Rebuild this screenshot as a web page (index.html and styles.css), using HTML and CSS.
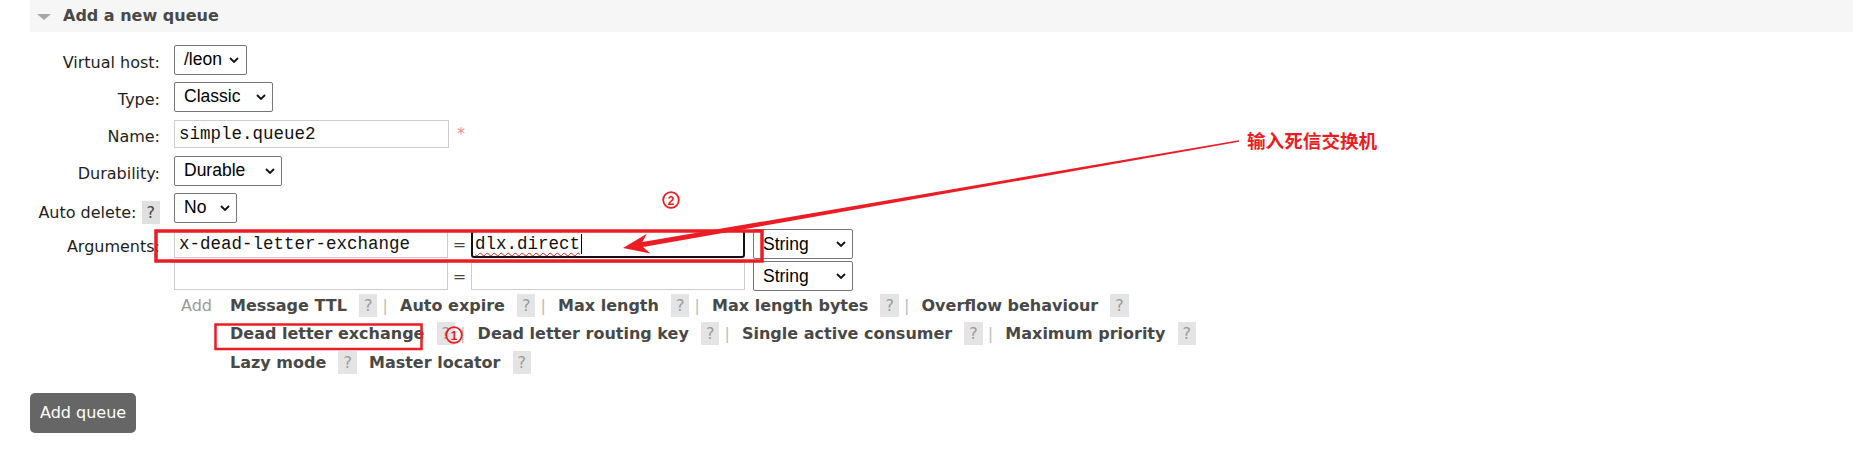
FILE: index.html
```html
<!DOCTYPE html>
<html lang="en">
<head>
<meta charset="utf-8">
<title>Add a new queue</title>
<link rel="stylesheet" href="styles.css">
</head>
<body>
<div class="page">
  <div class="section-head">
    <span class="tri"></span>
    <h2>Add a new queue</h2>
  </div>

  <form class="queue-form">
    <div class="row">
      <div class="label">Virtual host:</div>
      <div class="field">
        <div class="select w-vhost"><span>/leon</span><svg class="chev" viewBox="0 0 10 6"><path d="M1 1L5 5L9 1"/></svg></div>
      </div>
    </div>
    <div class="row">
      <div class="label">Type:</div>
      <div class="field">
        <div class="select w-type"><span>Classic</span><svg class="chev" viewBox="0 0 10 6"><path d="M1 1L5 5L9 1"/></svg></div>
      </div>
    </div>
    <div class="row">
      <div class="label">Name:</div>
      <div class="field">
        <div class="input w-name">simple.queue2</div>
        <span class="req">*</span>
      </div>
    </div>
    <div class="row">
      <div class="label">Durability:</div>
      <div class="field">
        <div class="select w-dur"><span>Durable</span><svg class="chev" viewBox="0 0 10 6"><path d="M1 1L5 5L9 1"/></svg></div>
      </div>
    </div>
    <div class="row">
      <div class="label">Auto delete: <span class="help dark">?</span></div>
      <div class="field">
        <div class="select w-auto"><span>No</span><svg class="chev" viewBox="0 0 10 6"><path d="M1 1L5 5L9 1"/></svg></div>
      </div>
    </div>
    <div class="row args">
      <div class="label">Arguments:</div>
      <div class="field">
        <div class="arg-row">
          <div class="input w-arg">x-dead-letter-exchange</div>
          <span class="eq">=</span>
          <div class="input w-arg focused"><span class="typo">dlx.direct</span><span class="caret"></span></div>
          <div class="select w-str"><span>String</span><svg class="chev" viewBox="0 0 10 6"><path d="M1 1L5 5L9 1"/></svg></div>
        </div>
        <div class="arg-row">
          <div class="input w-arg"></div>
          <span class="eq">=</span>
          <div class="input w-arg"></div>
          <div class="select w-str"><span>String</span><svg class="chev" viewBox="0 0 10 6"><path d="M1 1L5 5L9 1"/></svg></div>
        </div>
        <div class="arg-help">
          <span class="add">Add</span>
          <div class="links">
            <span class="link">Message TTL</span> <span class="help">?</span> | <span class="link">Auto expire</span> <span class="help">?</span> | <span class="link">Max length</span> <span class="help">?</span> | <span class="link">Max length bytes</span> <span class="help">?</span> | <span class="link">Overflow behaviour</span> <span class="help">?</span><br>
            <span class="link">Dead letter exchange</span> <span class="help">?</span> | <span class="link">Dead letter routing key</span> <span class="help">?</span> | <span class="link">Single active consumer</span> <span class="help">?</span> | <span class="link">Maximum priority</span> <span class="help">?</span><br>
            <span class="link">Lazy mode</span> <span class="help">?</span> <span class="link">Master locator</span> <span class="help">?</span>
          </div>
        </div>
      </div>
    </div>
  </form>

  <button class="btn" type="button">Add queue</button>

  <svg class="annot" width="1853" height="452" viewBox="0 0 1853 452">
    <rect x="156" y="231" width="606" height="30" class="mark thick"/>
    <rect x="215.5" y="324.5" width="206" height="24.5" class="mark"/>
    <polygon class="arrow" points="623,248 650.3,253.4 643.1,247.1 1239.1,141.8 1238.9,140.2 642.3,242.1 646.9,233.7"/>
    <circle cx="671" cy="200" r="7.8" class="num"/>
    <text x="671" y="204.5" class="num-t">2</text>
    <circle cx="454" cy="335" r="7.8" class="num"/>
    <text x="454" y="339.5" class="num-t">1</text>
    <text x="1247" y="147.5" class="cn">输入死信交换机</text>
  </svg>
</div>
</body>
</html>
```

FILE: styles.css
```css
html, body {
  margin: 0;
  padding: 0;
  background: #fff;
}

.page {
  position: relative;
  width: 1853px;
  height: 452px;
  overflow: hidden;
  font-family: "DejaVu Sans", Verdana, sans-serif;
  font-size: 16px;
  color: #222;
}

.section-head {
  margin-left: 30px;
  height: 32px;
  background: #f6f6f6;
  display: flex;
  align-items: center;
  padding-left: 7px;
}

.tri {
  width: 0;
  height: 0;
  border-left: 7px solid transparent;
  border-right: 7px solid transparent;
  border-top: 6px solid #a6a6a6;
  margin-top: 1px;
}

.section-head h2 {
  margin: 0 0 0 12px;
  font-size: 16px;
  font-weight: bold;
  line-height: 32px;
  color: #484848;
}

.queue-form {
  margin: 9px 0 0 30px;
}

.row {
  display: flex;
  align-items: flex-start;
  height: 37px;
}

.label {
  flex: none;
  width: 130px;
  text-align: right;
  padding-top: 11.5px;
  line-height: 20px;
  white-space: nowrap;
  color: #1e1e1e;
}

.field {
  margin-left: 14px;
  height: 37px;
  display: flex;
  align-items: center;
}

.row.args {
  height: auto;
}

.args .label {
  padding-top: 11px;
}

.args .field {
  display: block;
  height: auto;
  padding-top: 3px;
}

.arg-row {
  display: flex;
  align-items: center;
  height: 30px;
}

.arg-row + .arg-row {
  margin-top: 2px;
}

/* selects */
.select {
  box-sizing: border-box;
  height: 30px;
  border: 1px solid #767676;
  border-radius: 2px;
  background: #fff;
  display: flex;
  align-items: center;
  justify-content: space-between;
  padding: 0 6px 0 9px;
  font-family: "Liberation Sans", Arial, sans-serif;
  font-size: 17.5px;
  color: #000;
}

.chev {
  width: 10px;
  height: 6px;
  flex: none;
}

.chev path {
  fill: none;
  stroke: #111;
  stroke-width: 1.8;
}

.w-vhost { width: 73px; padding-right: 7px; }
.w-type { width: 99px; }
.w-dur { width: 108px; }
.w-auto { width: 63px; }
.w-str { width: 100px; margin-left: 8px; }

/* text inputs */
.input {
  box-sizing: border-box;
  height: 28px;
  border: 1px solid #ccc;
  padding: 0 4px;
  font-family: "Liberation Mono", "Courier New", monospace;
  font-size: 17.5px;
  line-height: 26px;
  color: #111;
  white-space: nowrap;
  display: flex;
  align-items: center;
}

.w-name { width: 275px; }
.w-arg { width: 274px; }

.input.focused {
  border: 2px solid #111;
  border-radius: 3px;
  padding-left: 2px;
}

.typo {
  text-decoration: underline wavy #e02020;
  text-decoration-thickness: 1px;
  text-underline-offset: 3px;
  text-decoration-skip-ink: none;
}

.caret {
  width: 1px;
  height: 20px;
  background: #000;
  margin-left: 1px;
}

.req {
  margin-left: 8px;
  color: #f78a8a;
  line-height: 20px;
}

.eq {
  width: 23px;
  text-align: center;
  color: #444;
}

/* help markers */
.help {
  display: inline-block;
  line-height: 23px;
  padding: 0 5px;
  background: #e4e4e4;
  color: #9a9a9a;
}

.help.dark {
  background: #e0e0e0;
  color: #444;
}

.arg-help {
  display: flex;
  align-items: flex-start;
  padding-left: 7px;
  padding-top: 0.5px;
}

.add {
  flex: none;
  width: 42px;
  line-height: 28.5px;
  color: #9a9a9a;
}

.links {
  line-height: 28.5px;
  color: #bbb;
  white-space: nowrap;
}

.link {
  padding: 0 7px;
  font-weight: bold;
  color: #484848;
}

.btn {
  display: block;
  margin: 15.5px 0 0 30px;
  padding: 10px 10px;
  border: 0;
  border-radius: 5px;
  background: #666;
  color: #fff;
  font-family: "DejaVu Sans", Verdana, sans-serif;
  font-size: 16px;
  line-height: 20px;
}

/* annotation overlay */
.annot {
  position: absolute;
  left: 0;
  top: 0;
  pointer-events: none;
}

.mark {
  fill: none;
  stroke: #ec1c24;
  stroke-width: 2.5;
}

.mark.thick {
  stroke-width: 3.5;
}

.arrow {
  fill: #ec1c24;
}

.num {
  fill: none;
  stroke: #ec1c24;
  stroke-width: 1.8;
}

.num-t {
  fill: #ec1c24;
  font-family: "Liberation Sans", Arial, sans-serif;
  font-weight: bold;
  font-size: 12px;
  text-anchor: middle;
}

.cn {
  fill: #ec1c24;
  font-family: "Noto Sans CJK SC", sans-serif;
  font-weight: bold;
  font-size: 18.6px;
}
```
